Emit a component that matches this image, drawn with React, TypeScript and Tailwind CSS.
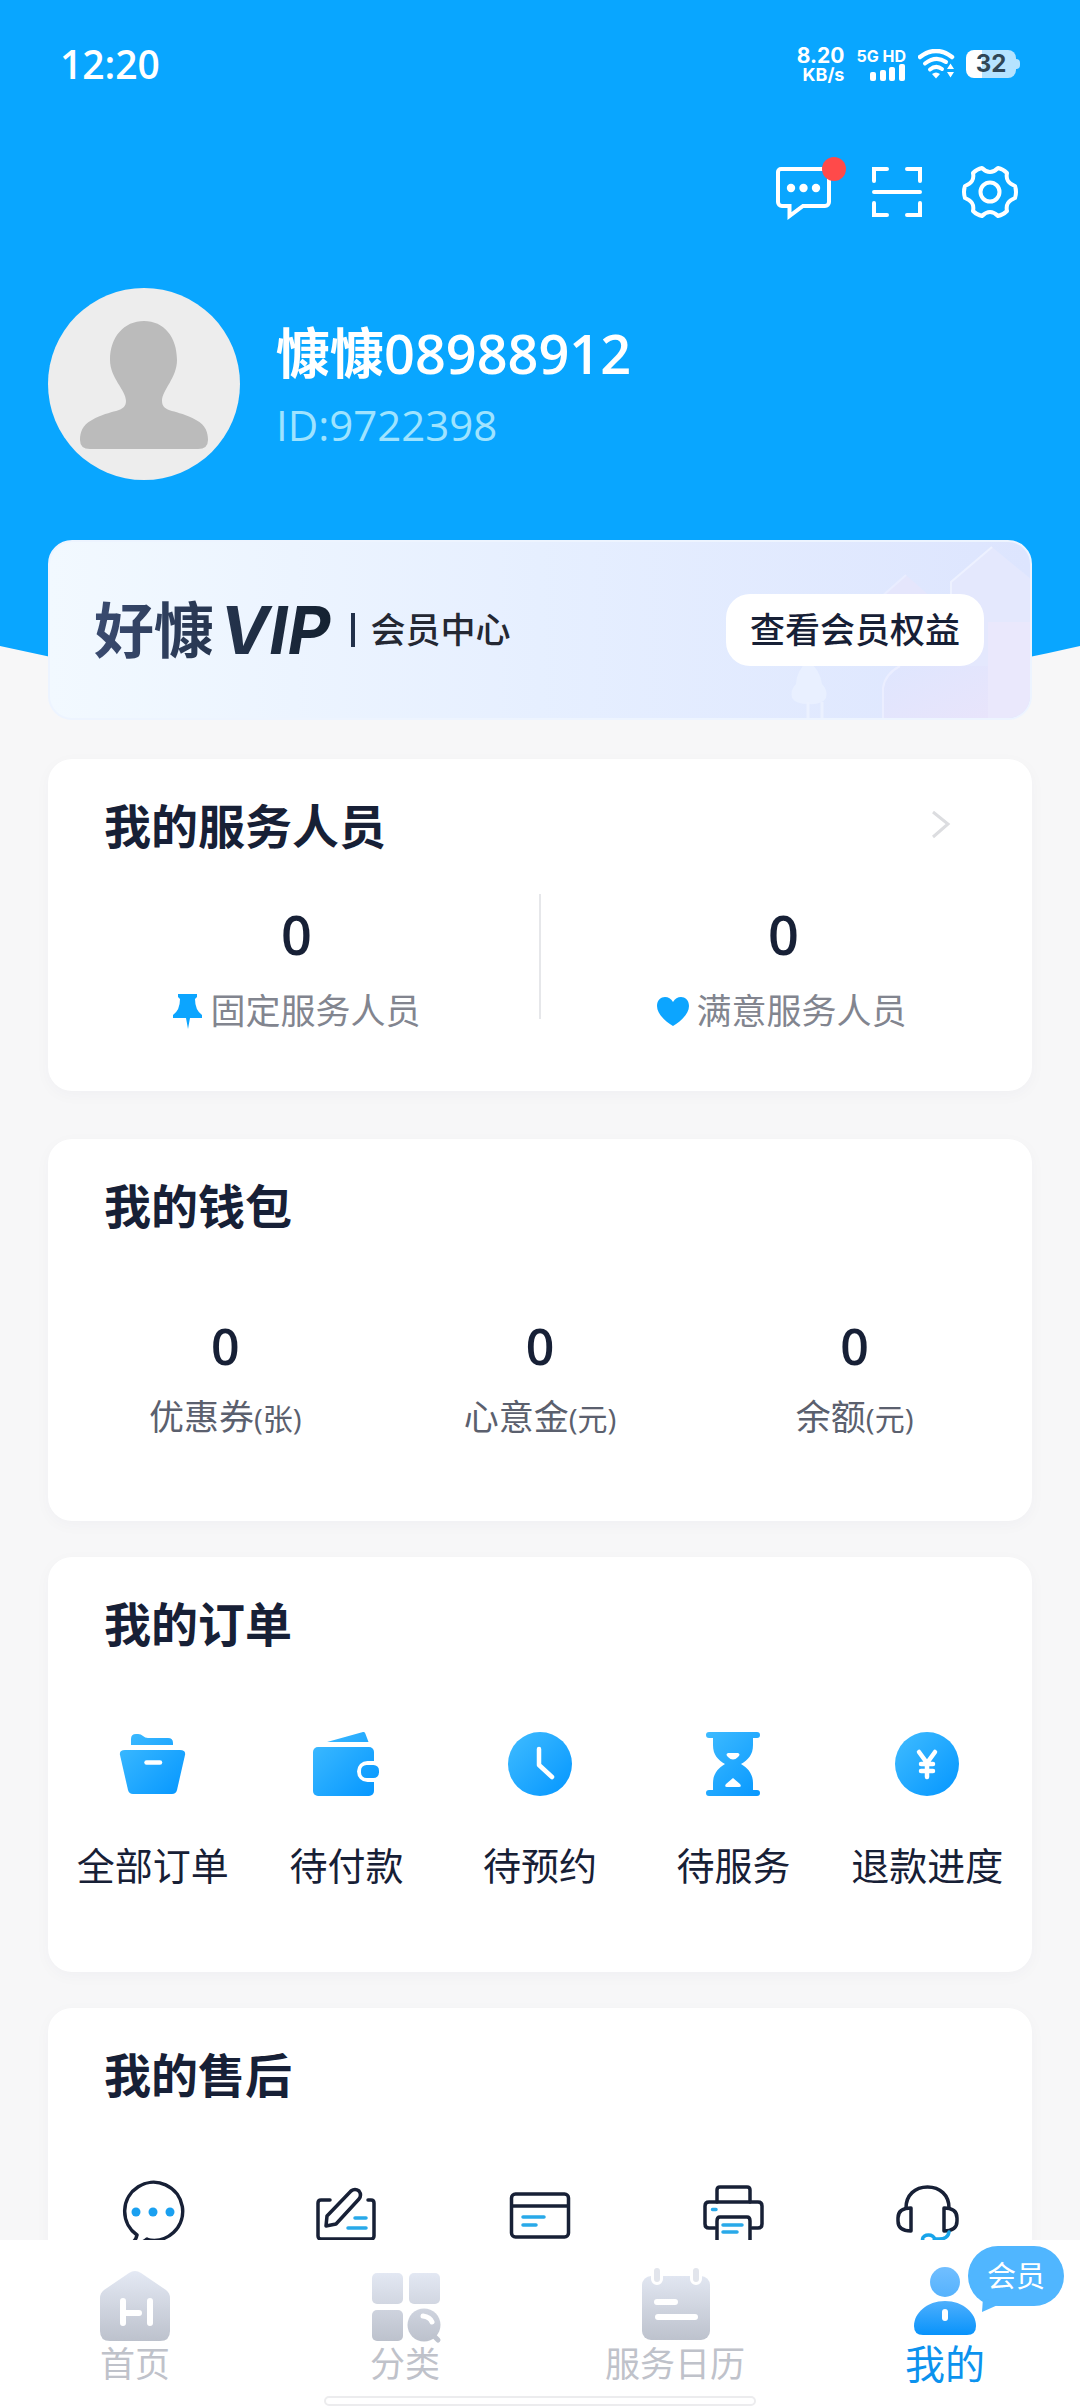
import type { ReactNode } from "react";

/* ---------- top icons ---------- */

function SignalBars() {
  return (
    <svg width="36" height="17" viewBox="0 0 36 17" fill="#fff" aria-hidden="true">
      <rect x="0" y="8" width="6" height="9" rx="2" />
      <rect x="10" y="6" width="6" height="11" rx="2" />
      <rect x="19" y="3" width="6" height="14" rx="2" />
      <rect x="29" y="0" width="6" height="17" rx="2" />
    </svg>
  );
}

function WifiIcon() {
  return (
    <svg width="38" height="30" viewBox="0 0 38 30" fill="none" stroke="#fff" aria-hidden="true">
      <path d="M2 8Q18 -4 34 8" strokeWidth="4.5" strokeLinecap="round" />
      <path d="M7 14.5Q18 6 28 13" strokeWidth="4" strokeLinecap="round" />
      <path d="M12 20.5Q18 15.500 24 20" strokeWidth="4" strokeLinecap="round" />
      <path d="M14 25Q18 22 22 25L18 29.500Z" fill="#fff" stroke="none" />
      <path d="M29 20L32.500 14.500L36 20ZM29 23H36L32.500 28.500Z" fill="#fff" stroke="none" />
    </svg>
  );
}

function MessageIcon() {
  return (
    <svg width="60" height="60" viewBox="0 0 60 60" fill="none" stroke="#fff" strokeWidth="4" aria-hidden="true">
      <path d="M7 7H51a4 4 0 0 1 4 4V40a4 4 0 0 1-4 4H29L15.500 54V44H8a4 4 0 0 1-4-4V10a3 3 0 0 1 3-3Z" />
      <g fill="#fff" stroke="none">
        <circle cx="17" cy="26" r="4.200" />
        <circle cx="29.500" cy="26" r="4.200" />
        <circle cx="42" cy="26" r="4.200" />
      </g>
    </svg>
  );
}

function ScanIcon() {
  return (
    <svg width="60" height="60" viewBox="0 0 60 60" fill="none" stroke="#fff" strokeWidth="4" strokeLinecap="round" aria-hidden="true">
      <path d="M7 19V7H20M40 7H53V19M7 41V53H20M40 53H53V41M7 30H53" />
    </svg>
  );
}

function GearIcon() {
  return (
    <svg width="60" height="60" viewBox="0 0 60 60" fill="none" stroke="#fff" strokeWidth="4" strokeLinejoin="round" aria-hidden="true">
      <path d="M22 6Q26 10 30 10Q34 10 38 6Q43 7 47 11Q46 16 48 19Q50 22 55 24Q57 30 55 36Q50 38 48 41Q46 44 47 49Q43 53 38 54Q34 50 30 50Q26 50 22 54Q17 53 13 49Q14 44 12 41Q10 38 5 36Q3 30 5 24Q10 22 12 19Q14 16 13 11Q17 7 22 6Z" />
      <circle cx="30" cy="30" r="9.500" />
    </svg>
  );
}

function Avatar() {
  return (
    <svg width="192" height="192" viewBox="0 0 192 192" className="shrink-0" role="img" aria-label="头像">
      <circle cx="96" cy="96" r="96" fill="#ededed" />
      <path
        fill="#bbb"
        d="M96 33C116 33 129 49 129 72C129 90 114 102 114 113C114 125 129 121 148 132C158 137 160 145 160 152Q160 161 150 161H42Q32 161 32 152C32 145 34 137 44 132C63 121 78 125 78 113C78 102 62 90 62 72C62 49 76 33 96 33Z"
      />
    </svg>
  );
}

/* ---------- order icons ---------- */

function Gradients() {
  return (
    <svg width="0" height="0" className="absolute" aria-hidden="true">
      <defs>
        <linearGradient id="blue" x1="0" y1="0" x2="72" y2="72" gradientUnits="userSpaceOnUse">
          <stop offset="0.100" stopColor="#3dbaff" />
          <stop offset="0.900" stopColor="#0798ff" />
        </linearGradient>
        <linearGradient id="gray" x1="0" y1="5" x2="0" y2="76" gradientUnits="userSpaceOnUse">
          <stop offset="0" stopColor="#e4e9f4" />
          <stop offset="1" stopColor="#bcc1cc" />
        </linearGradient>
        <linearGradient id="person" x1="0" y1="0" x2="0" y2="70" gradientUnits="userSpaceOnUse">
          <stop offset="0" stopColor="#72bfff" />
          <stop offset="0.450" stopColor="#55b2fd" />
          <stop offset="1" stopColor="#0692fb" />
        </linearGradient>
      </defs>
    </svg>
  );
}

function Icon72({ children }: { children: ReactNode }) {
  return (
    <svg width="72" height="72" viewBox="0 0 72 72" fill="none" strokeLinecap="round" strokeLinejoin="round" aria-hidden="true">
      {children}
    </svg>
  );
}

const NAVY = "#172036";
const SKY = "#29a9e9";

const orders = [
  {
    label: "全部订单",
    icon: (
      <Icon72>
        <path fill="url(#blue)" d="M14 17V11Q14 6 19 6H21Q24 6 26 8Q28 10 31 10H51Q56 10 56 15V17Z" />
        <path fill="url(#blue)" d="M8 22H63Q69 22 68 27L60 62Q59 66 55 66H16Q12 66 11 62L3 27Q2 22 8 22Z" />
        <path stroke="#fff" strokeWidth="4.500" d="M29.500 34.500H43" />
      </Icon72>
    ),
  },
  {
    label: "待付款",
    icon: (
      <Icon72>
        <path fill="url(#blue)" d="M17 14L53 4Q55 3.500 55.500 6L58.500 14Z" />
        <rect x="3" y="19" width="61" height="49" rx="5" fill="url(#blue)" />
        <path fill="#fff" d="M66 33H57.500a10.500 10.500 0 0 0 0 21H66Z" />
        <rect x="51" y="37" width="18" height="13" rx="5.500" fill="url(#blue)" />
      </Icon72>
    ),
  },
  {
    label: "待预约",
    icon: (
      <Icon72>
        <circle cx="36" cy="36" r="32" fill="url(#blue)" />
        <path stroke="#fff" strokeWidth="4.500" d="M35 21V37L48 49" />
      </Icon72>
    ),
  },
  {
    label: "待服务",
    icon: (
      <Icon72>
        <path
          fill="url(#blue)"
          d="M11 4H59a3 3 0 0 1 0 6H55V17C55 27 50 32 43 36C50 40 55 46 55 55V62H59a3 3 0 0 1 0 6H11a3 3 0 0 1 0-6H15V55C15 46 20 40 27 36C20 32 15 27 15 17V10H11a3 3 0 0 1 0-6Z"
        />
        <path fill="#fff" d="M30 25H40Q43 26 40 29Q35 34 30 29Q27 26 30 25ZM35 50L42 56Q44 59 41 59H29Q26 59 28 56Z" />
      </Icon72>
    ),
  },
  {
    label: "退款进度",
    icon: (
      <Icon72>
        <circle cx="36" cy="36" r="32" fill="url(#blue)" />
        <path stroke="#fff" strokeWidth="4.500" d="M28 24L36 35L44 24M36 35V49M30 36H42M30 43H42" />
      </Icon72>
    ),
  },
];

const afterSales = [
  {
    label: "在线咨询",
    icon: (
      <Icon72>
        <path stroke={NAVY} strokeWidth="3.500" d="M20 56A29 29 0 1 1 30 60.500M20 56Q19 61 15 64Q25 65 30 60" />
        <g fill="#1aa0f0">
          <circle cx="19" cy="33" r="4.500" />
          <circle cx="36" cy="33" r="4.500" />
          <circle cx="53" cy="33" r="4.500" />
        </g>
      </Icon72>
    ),
  },
  {
    label: "售后申请",
    icon: (
      <Icon72>
        <path stroke={NAVY} strokeWidth="3.500" d="M20 21H11Q8 21 8 24V57Q8 60 11 60H61Q64 60 64 57V24Q64 21 61 21H58" />
        <path stroke={NAVY} strokeWidth="3.500" d="M16 47L17 37L41 12Q45 9 49 12Q52 16 49 20L26 45Z" />
        <path stroke={SKY} strokeWidth="3.500" d="M45 39H56M38 49H56" />
      </Icon72>
    ),
  },
  {
    label: "售后记录",
    icon: (
      <Icon72>
        <rect x="7.500" y="15" width="57" height="43" rx="4" stroke={NAVY} strokeWidth="3.500" />
        <path stroke={NAVY} strokeWidth="3.500" strokeLinecap="butt" d="M7 27H65" />
        <path stroke={SKY} strokeWidth="3.500" d="M19 38H40M19 46H32" />
      </Icon72>
    ),
  },
  {
    label: "发票",
    icon: (
      <Icon72>
        <path stroke={NAVY} strokeWidth="3.500" d="M19 23V11Q19 8 22 8H49Q52 8 52 11V23" />
        <path stroke={NAVY} strokeWidth="3.500" d="M17 49H11Q7 49 7 45V27Q7 23 11 23H60Q64 23 64 27V45Q64 49 60 49H54" />
        <path stroke={NAVY} strokeWidth="3.500" d="M19 70V42Q19 38 22 38H49Q52 38 52 42V70Z" />
        <path stroke={SKY} strokeWidth="3.500" d="M14.500 30.500H18M25 46H44M25 53H39" />
      </Icon72>
    ),
  },
  {
    label: "联系客服",
    icon: (
      <Icon72>
        <path stroke={NAVY} strokeWidth="3.500" d="M15 29C15 16 24 8 36.500 8C49 8 58 16 58 29" />
        <path stroke={NAVY} strokeWidth="3.500" d="M20 29V52Q7 52 7 42V39Q7 29 20 29ZM53 29V52Q66 52 66 42V39Q66 29 53 29Z" />
        <path stroke="#18a4ea" strokeWidth="3.500" d="M58 53Q57 60 48 60H44" />
        <ellipse cx="37.500" cy="60" rx="6" ry="4" stroke="#18a4ea" strokeWidth="3.500" />
      </Icon72>
    ),
  },
];

/* ---------- tab bar icons ---------- */

function TabIcon({ children }: { children: ReactNode }) {
  return (
    <svg width="80" height="80" viewBox="0 0 80 80" fill="none" strokeLinecap="round" aria-hidden="true">
      {children}
    </svg>
  );
}

const tabs = [
  {
    label: "首页",
    icon: (
      <TabIcon>
        <path fill="url(#gray)" d="M34 7Q40 3 46 7L71 24Q75 27 75 32V65Q75 75 65 75H15Q5 75 5 65V32Q5 27 9 24Z" />
        <path stroke="#fff" strokeWidth="6" d="M28 35V57M55 35V57M28 47H44" />
      </TabIcon>
    ),
  },
  {
    label: "分类",
    icon: (
      <TabIcon>
        <g fill="url(#gray)">
          <rect x="7" y="7" width="31" height="31" rx="5" />
          <rect x="44" y="7" width="31" height="31" rx="5" />
          <rect x="7" y="44" width="31" height="31" rx="5" />
          <circle cx="59" cy="59" r="16.500" />
        </g>
        <path stroke="#bfc4cf" strokeWidth="5" d="M69 70L73 74" />
        <path stroke="#fff" strokeWidth="5" d="M58 50Q65 51 67 56" />
      </TabIcon>
    ),
  },
  {
    label: "服务日历",
    icon: (
      <TabIcon>
        <rect x="7" y="10" width="68" height="64" rx="9" fill="url(#gray)" />
        <path stroke="#fff" strokeWidth="12" d="M22 6V13M61 6V13" />
        <path stroke="#e2e5ec" strokeWidth="6" d="M22 5V13M61 5V13" />
        <path stroke="#fff" strokeWidth="6" d="M22 36H40M23 51H60" />
      </TabIcon>
    ),
  },
  {
    label: "我的",
    active: true,
    badge: "会员",
    icon: (
      <TabIcon>
        <circle cx="40" cy="16" r="15" fill="url(#person)" />
        <path fill="url(#person)" d="M40 35C58 35 71 47 71 60Q71 69 62 69H18Q9 69 9 60C9 47 22 35 40 35Z" />
        <path stroke="#fff" strokeWidth="6" d="M40 46V52" />
      </TabIcon>
    ),
  },
];

/* ---------- sections ---------- */

function StatusBar() {
  return (
    <div className="flex h-12 items-center justify-between pl-[60px] pr-[60px] text-white">
      <div className="text-[39px] leading-[48px] font-semibold">12:20</div>
      <div className="flex items-center font-[Inter] font-bold">
        <div className="mr-3 text-right">
          <div className="text-[21px] leading-[21px]">8.20</div>
          <div className="text-[18px] leading-[18px]">KB/s</div>
        </div>
        <div className="mr-3 flex flex-col items-end">
          <div className="text-base leading-4">5G HD</div>
          <SignalBars />
        </div>
        <WifiIcon />
        <div className="ml-2.5 flex items-center">
          <div className="flex h-[28px] w-[50px] items-center justify-center rounded-lg bg-linear-to-r from-white from-32% to-[#b5e3ff] to-32% text-2xl leading-7 text-[#2f4656]">
            32
          </div>
          <div className="h-2.5 w-1 rounded-r bg-[#b5e3ff]" />
        </div>
      </div>
    </div>
  );
}

function VipBanner() {
  return (
    <section className="relative flex h-[180px] items-center justify-between overflow-hidden rounded-3xl border-2 border-[#edf4ff] bg-linear-to-r from-[#f2f9ff] via-[#e6efff] to-[#dde5fe] pl-[44px] pr-[46px]">
      {/* houses and a tree behind the button */}
      <svg className="absolute right-0 bottom-0" width="260" height="176" viewBox="0 0 260 176" fill="none" aria-hidden="true">
        <defs>
          <linearGradient id="house" x1="0" y1="0" x2="1" y2="1">
            <stop offset="0" stopColor="#dfe6fe" />
            <stop offset="1" stopColor="#e8e4fb" />
          </linearGradient>
        </defs>
        <path d="M110 56L136 33L162 56Z" fill="#e5e6fc" />
        <path d="M110 56L136 33" stroke="#e9edff" strokeWidth="2" />
        <path d="M181 176V40L222 5L262 38V176Z" fill="#e4e8fd" />
        <path d="M181 60V40L222 5" stroke="#edf1ff" strokeWidth="2" />
        <path d="M113 176V146Q115 132 130 124H218V176Z" fill="url(#house)" />
        <path d="M113 176V146Q115 132 130 124" stroke="#ebeeff" strokeWidth="2" />
        <path d="M218 80H262V176H218Z" fill="#eae8fc" />
        <path d="M38 118Q26 130 26 142Q20 148 22 156Q26 162 38 162Q52 163 56 156Q58 148 52 142Q50 128 38 118Z" fill="#e9f0ff" />
        <path d="M38 160V176M52 160V176" stroke="#ebf1ff" strokeWidth="3" />
      </svg>
      <div className="relative flex items-center">
        <div className="flex items-center gap-1.5 bg-linear-to-r from-[#3a4b70] to-[#13202f] bg-clip-text text-transparent">
          <span className="text-[60px] leading-[72px] font-bold">好慷</span>
          <span className="pr-2 font-[Inter] text-[66px] leading-[72px] font-bold italic">VIP</span>
        </div>
        <div className="mx-3 h-[34px] w-1 bg-[#22304a]" />
        <span className="ml-1 text-[35px] leading-10 font-medium text-[#242833]">会员中心</span>
      </div>
      <button className="relative h-[72px] rounded-3xl bg-white px-6 text-[35px] leading-10 font-medium text-[#172036]">
        查看会员权益
      </button>
    </section>
  );
}

function Card({ title, action, children }: { title: string; action?: ReactNode; children: ReactNode }) {
  return (
    <section className="rounded-3xl bg-white pt-[43px] shadow-[0_4px_16px_rgba(30,40,90,0.03)]">
      <div className="flex h-12 items-center justify-between px-14">
        <h2 className="text-[47px] leading-[48px] font-semibold">{title}</h2>
        {action}
      </div>
      {children}
    </section>
  );
}

function StaffCard() {
  return (
    <Card
      title="我的服务人员"
      action={
        <button aria-label="查看全部" className="mr-5">
          <svg width="32" height="32" viewBox="0 0 32 32" fill="none" stroke="#dcdde0" strokeWidth="3" aria-hidden="true">
            <path d="M9 2L24 14L9 27" />
          </svg>
        </button>
      }
    >
      <div className="mt-11 flex px-1.5 pb-[60px]">
        <button className="flex-1 pt-3">
          <div className="text-[54px] leading-[56px] font-semibold">0</div>
          <div className="mt-[29px] flex h-10 items-center justify-center gap-1.5 text-[35px] leading-10 text-[#82858f]">
            <svg width="32" height="36" viewBox="0 0 32 36" fill="#0ca5ff" aria-hidden="true">
              <path d="M6 1H25V4L23 6Q23 17 30 22V25H18L16 36L14 25H1V22Q8 17 8 6L6 4Z" />
            </svg>
            固定服务人员
          </div>
        </button>
        <div className="h-[125px] w-0.5 bg-[#e6e7ea]" />
        <button className="flex-1 pt-3">
          <div className="text-[54px] leading-[56px] font-semibold">0</div>
          <div className="mt-[29px] flex h-10 items-center justify-center gap-1.5 pr-1 text-[35px] leading-10 text-[#82858f]">
            <svg width="34" height="36" viewBox="0 0 34 36" fill="#0ca5ff" aria-hidden="true">
              <path d="M17 33C10 29 1 21 1 13C1 7 5 4 9 4Q14 4 17 9Q20 4 25 4C29 4 33 7 33 13C33 21 24 29 17 33Z" />
            </svg>
            满意服务人员
          </div>
        </button>
      </div>
    </Card>
  );
}

const wallet = [
  { name: "优惠券", unit: "张" },
  { name: "心意金", unit: "元" },
  { name: "余额", unit: "元" },
];

function WalletCard() {
  return (
    <Card title="我的钱包">
      <div className="mt-[88px] grid grid-cols-3 px-5 pb-[84px]">
        {wallet.map((w) => (
          <button key={w.name}>
            <div className="text-[50px] leading-[56px] font-semibold">0</div>
            <div className="mt-[23px] h-10 text-[35px] leading-10 text-[#5b606e]">
              {w.name}
              <span className="text-[30px] leading-8">({w.unit})</span>
            </div>
          </button>
        ))}
      </div>
    </Card>
  );
}

export default function App() {
  return (
    <div className="flex h-screen flex-col bg-[#f7f7f8] font-['Open_Sans','Noto_Sans_CJK_SC',sans-serif] text-[#172036]">
      <Gradients />
      <div className="min-h-0 flex-1 overflow-y-auto [scrollbar-width:none]">
        <header className="bg-[#09a6ff] pt-10 pb-[166px]">
          <StatusBar />
          <div className="mt-[74px] flex justify-end gap-[33px] pr-[60px]">
            <button aria-label="消息" className="relative">
              <MessageIcon />
              <span className="absolute -top-[5px] -right-3 size-6 rounded-full bg-[#ff4a4a]" />
            </button>
            <button aria-label="扫一扫">
              <ScanIcon />
            </button>
            <button aria-label="设置">
              <GearIcon />
            </button>
          </div>
          <div className="mt-[66px] flex items-center gap-9 pl-12">
            <Avatar />
            <div className="pt-1 text-white">
              <h1 className="text-[54px] leading-[72px] font-semibold">慷慷08988912</h1>
              <p className="mt-1.5 text-[42px] leading-[60px] text-[#9fe3ff]">ID:9722398</p>
            </div>
          </div>
        </header>
        <svg className="block h-[62px] w-full" viewBox="0 0 1080 62" preserveAspectRatio="none" aria-hidden="true">
          <path d="M0 0Q540 124 1080 0Z" fill="#09a6ff" />
        </svg>

        <main className="relative -mt-[168px] px-12">
          <VipBanner />
          <div className="mt-[39px]">
            <StaffCard />
          </div>
          <div className="mt-12 flex flex-col gap-9">
            <WalletCard />
            <Card title="我的订单">
              <div className="mt-20 grid grid-cols-5 px-2 pb-[87px]">
                {orders.map((o) => (
                  <button key={o.label} className="flex flex-col items-center gap-[45px] text-[38px] leading-10">
                    {o.icon}
                    <span className="h-10">{o.label}</span>
                  </button>
                ))}
              </div>
            </Card>
            <Card title="我的售后">
              <div className="mt-20 grid grid-cols-5 px-2 pb-20">
                {afterSales.map((a) => (
                  <button key={a.label} aria-label={a.label} className="flex flex-col items-center">
                    {a.icon}
                  </button>
                ))}
              </div>
            </Card>
          </div>
        </main>
      </div>

      <nav className="bg-white pt-[26px]">
        <div className="grid grid-cols-4">
          {tabs.map((t) => (
            <a key={t.label} href="#" className="relative flex flex-col items-center">
              {t.icon}
              <span className={t.active ? "text-[40px] leading-9 text-[#0b92ee]" : "text-[35px] leading-9 text-[#bfc2ca]"}>
                {t.label}
              </span>
              {t.badge && (
                <span className="absolute -top-5 right-4 flex h-[60px] w-24 items-center justify-center rounded-[30px] bg-[#50b6ff] text-[29px] leading-9 text-white">
                  {t.badge}
                  <svg className="absolute bottom-[-6px] left-3" width="20" height="14" viewBox="0 0 20 14" fill="#50b6ff" aria-hidden="true">
                    <path d="M3 0L2 14L20 6Z" />
                  </svg>
                </span>
              )}
            </a>
          ))}
        </div>
        <div className="mx-auto mt-3.5 mb-0.5 h-2.5 w-2/5 rounded-full border-2 border-[#ececee] bg-white" />
      </nav>
    </div>
  );
}
